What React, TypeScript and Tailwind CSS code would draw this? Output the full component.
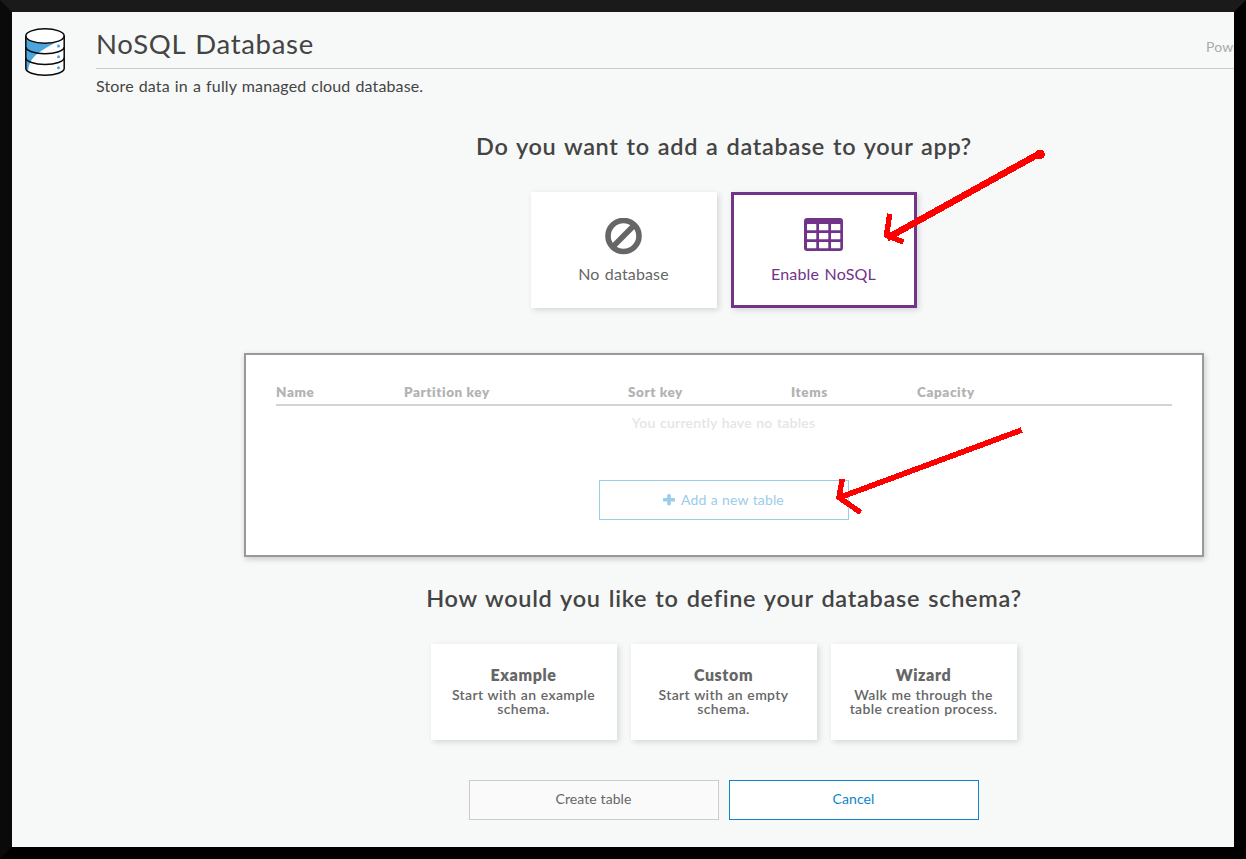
import type { ReactNode } from "react";

function DatabaseLogo() {
  return (
    <svg className="h-12 w-[42px]" viewBox="0 0 42 48" fill="none">
      <path d="M2 8V40.500C2 44 10.500 47 21 47S40 44 40 40.500V8Z" fill="#fff" />
      <path d="M2 8C4 12.500 12 15 21 15C28 15 33 14 37 12C27 17 19 21 13 26C7 31 5 36 4 43L2 41Z" fill="#4ba6dd" />
      <ellipse cx="21" cy="8" rx="19.200" ry="7" fill="#fff" />
      <g stroke="#0a0a0a" strokeWidth="1.500">
        <ellipse cx="21" cy="8" rx="19.200" ry="7.200" />
        <path d="M1.800 8V40.500C1.800 44.200 10.500 47.200 21 47.200S40.200 44.200 40.200 40.500V8" />
        <path d="M1.800 19C1.800 22.700 10.500 25.700 21 25.700S40.200 22.700 40.200 19" />
        <path d="M1.800 29.800C1.800 33.500 10.500 36.500 21 36.500S40.200 33.500 40.200 29.800" />
      </g>
      <g fill="#4ba6dd">
        <circle cx="34.500" cy="18" r="1.500" />
        <circle cx="34.500" cy="28.700" r="1.500" />
        <circle cx="34.500" cy="39.700" r="1.500" />
      </g>
    </svg>
  );
}

function BanIcon() {
  return (
    <svg className="mr-px h-[37px] w-[37px]" viewBox="0 0 37 37" fill="none" stroke="#666" strokeWidth="5.600">
      <circle cx="18.500" cy="18" r="15.500" />
      <path d="M7.600 28.900L29.400 7.100" />
    </svg>
  );
}

function TableIcon() {
  return (
    <svg className="mr-[2px] h-[33px] w-[39px]" viewBox="0 0 39 33">
      <rect width="39" height="33" rx="3.200" fill="#713489" />
      {[6, 15, 24].map((y) =>
        [3, 15, 27].map((x) => (
          <rect key={`${x}-${y}`} x={x} y={y} width="9.300" height="6.300" rx="0.600" fill="#fff" />
        ))
      )}
    </svg>
  );
}

function PlusIcon() {
  return (
    <svg className="h-3 w-3" viewBox="0 0 12 12" fill="#9acdea">
      <rect x="4.200" y="0.300" width="3.600" height="11" rx="0.700" />
      <rect x="0" y="4" width="12" height="3.600" rx="0.700" />
    </svg>
  );
}

function Annotations() {
  return (
    <svg
      className="pointer-events-none absolute inset-0 h-full w-full"
      viewBox="0 0 1246 859"
      fill="none"
      stroke="#f00"
      strokeWidth="6.600"
      strokeLinecap="square"
      strokeLinejoin="round"
      shapeRendering="crispEdges"
    >
      <path d="M1039 153.800L890 236.500" />
      <path d="M889.300 216.500L886.500 235.500L901 241" strokeWidth="5.400" />
      <circle cx="1040" cy="154.500" r="1.500" />
      <path d="M1019 431L841 497" strokeWidth="5.600" />
      <path d="M841.800 481.500L839 497.500L858.500 511" strokeWidth="5.400" />
    </svg>
  );
}

const cardShadow = "shadow-[2px_2px_6px_rgba(0,0,0,0.14)]";

function SchemaCard({ title, children }: { title: string; children: ReactNode }) {
  return (
    <button className={`flex h-24 w-[186px] flex-col items-center bg-white pt-[21px] pr-px text-[#666] ${cardShadow}`}>
      <span className="text-base leading-5 font-extrabold tracking-[0.6px]">{title}</span>
      <span className="mt-[3px] text-sm leading-[14px] font-semibold tracking-[0.35px] [word-spacing:0.5px]">{children}</span>
    </button>
  );
}

export default function App() {
  return (
    <div className="relative flex h-[859px] w-[1246px] overflow-hidden border-12 border-t-[#1a1a1a] border-r-black border-b-black border-l-[#0a0a0a] bg-[#f7f9f8] font-['Lato',sans-serif] text-[#444]">
      <div className="flex min-w-0 flex-1 flex-col overflow-hidden">
        <header className="flex">
          <div className="w-[84px] shrink-0 pt-4 pl-3">
            <DatabaseLogo />
          </div>
          <div className="min-w-0 flex-1">
            <div className="flex h-[57px] items-center justify-between border-b border-[#ccc] pt-2">
              <h1 className="text-[27.5px] leading-8 tracking-[0.7px] [word-spacing:2px]">NoSQL Database</h1>
              <span className="w-7 overflow-hidden pt-[6px] text-sm tracking-[0.2px] whitespace-nowrap text-[#aaa]">Powered</span>
            </div>
            <p className="mt-[5px] text-base leading-6 tracking-[0.14px] [word-spacing:0.8px]">
              Store data in a fully managed cloud database.
            </p>
          </div>
        </header>

        <main className="ml-[232px] flex w-[960px] flex-col items-center">
          <h2 className="mt-[32px] h-8 text-[23.5px] leading-8 font-semibold tracking-[0.66px] [word-spacing:1.500px]">
            Do you want to add a database to your app?
          </h2>
          <div className="mt-[30px] flex gap-[14px] text-base leading-5">
            <button className={`flex h-[116px] w-[186px] flex-col items-center bg-white pt-[26px] text-[#666] ${cardShadow}`}>
              <BanIcon />
              <span className="mt-[9px] mr-px tracking-[0.15px] [word-spacing:1px]">No database</span>
            </button>
            <button className={`flex h-[116px] w-[186px] flex-col items-center border-3 border-[#713489] bg-white pt-[23px] text-[#713489] ${cardShadow}`}>
              <TableIcon />
              <span className="mt-[13px] mr-px tracking-[0.2px] [word-spacing:1px]">Enable NoSQL</span>
            </button>
          </div>

          <section className="mt-[45px] flex h-[204px] w-full flex-col items-center border-2 border-[#999] bg-white px-[30px] pt-[27px] shadow-[1px_2px_6px_rgba(0,0,0,0.2)]">
            <div className="grid h-6 w-full grid-cols-[128px_224px_163px_126px_1fr] border-b-2 border-[#d4d4d4] text-[13.5px] leading-5 font-extrabold tracking-[0.58px] text-[#b3b3b3]">
              <span>Name</span>
              <span>Partition key</span>
              <span>Sort key</span>
              <span>Items</span>
              <span>Capacity</span>
            </div>
            <p className="mt-[7px] mr-px text-sm leading-5 font-semibold tracking-[0.22px] text-[#e5e5e5] [word-spacing:0.7px]">
              You currently have no tables
            </p>
            <button className="mt-[47px] flex h-10 w-[250px] items-center justify-center gap-[6px] border border-[#9acdea] pr-px text-sm tracking-[0.15px] text-[#9acdea] [word-spacing:0.5px]">
              <PlusIcon />
              Add a new table
            </button>
          </section>

          <h2 className="mt-[25px] h-8 text-[23.5px] leading-8 font-semibold tracking-[0.71px] [word-spacing:1.500px]">
            How would you like to define your database schema?
          </h2>
          <div className="mt-[30px] flex gap-[14px]">
            <SchemaCard title="Example">Start with an example<br />schema.</SchemaCard>
            <SchemaCard title="Custom">Start with an empty<br />schema.</SchemaCard>
            <SchemaCard title="Wizard">Walk me through the<br />table creation process.</SchemaCard>
          </div>
          <div className="mt-10 flex gap-[10px] text-sm tracking-[0.1px]">
            <button className="h-10 w-[250px] border border-[#ccc] bg-[#fafafa] pr-px pb-[2px] text-[#666]">Create table</button>
            <button className="h-10 w-[250px] border border-[#0f85c7] bg-white pr-px pb-[2px] text-[#0f85c7]">Cancel</button>
          </div>
        </main>
      </div>
      <div className="pointer-events-none absolute -inset-3">
        <Annotations />
      </div>
    </div>
  );
}
